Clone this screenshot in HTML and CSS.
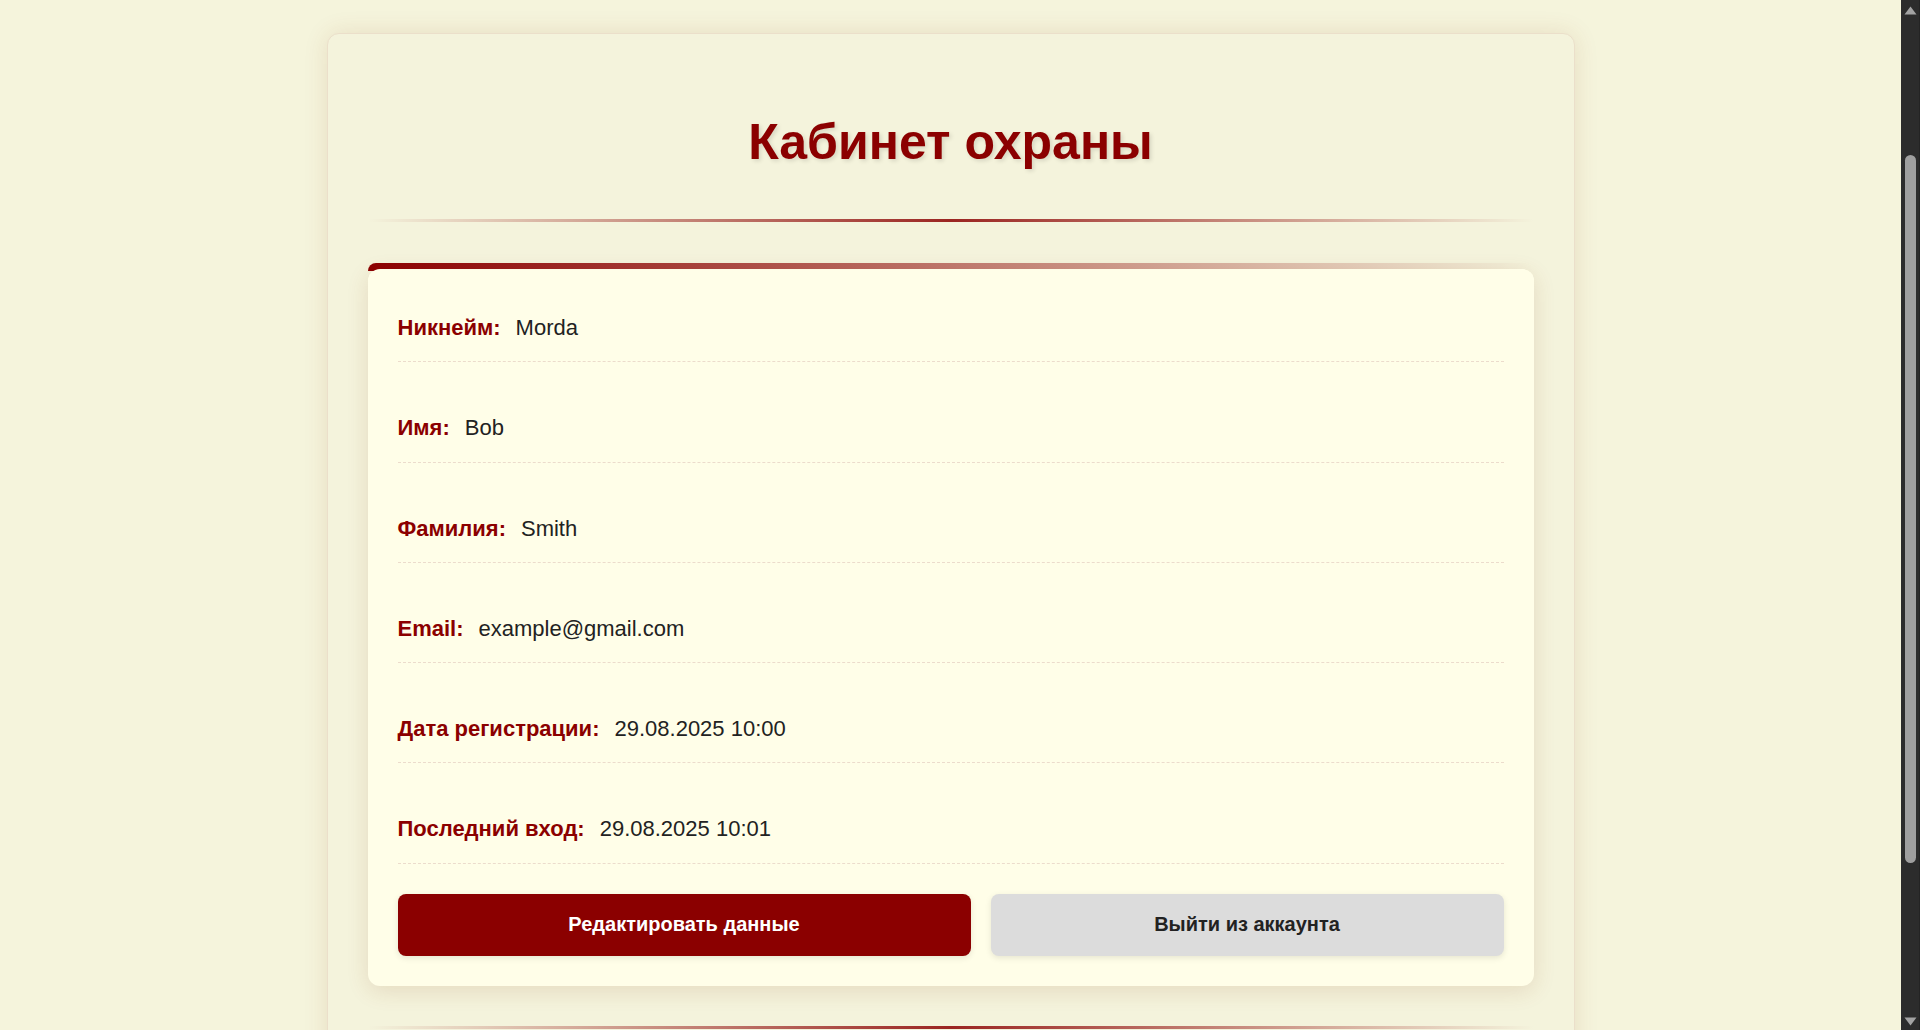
FILE: index.html
```html
<!DOCTYPE html>
<html lang="ru">
<head>
<meta charset="utf-8">
<title>Кабинет охраны</title>
<link rel="stylesheet" href="styles.css">
</head>
<body>
  <main class="container">
    <h1 class="title">Кабинет охраны</h1>
    <div class="divider"></div>

    <section class="card">
      <div class="row"><span class="label">Никнейм:</span><span class="value">Morda</span></div>
      <div class="row"><span class="label">Имя:</span><span class="value">Bob</span></div>
      <div class="row"><span class="label">Фамилия:</span><span class="value">Smith</span></div>
      <div class="row"><span class="label">Email:</span><span class="value">example@gmail.com</span></div>
      <div class="row"><span class="label">Дата регистрации:</span><span class="value">29.08.2025 10:00</span></div>
      <div class="row"><span class="label">Последний вход:</span><span class="value">29.08.2025 10:01</span></div>

      <div class="actions">
        <button class="btn btn-primary" type="button">Редактировать данные</button>
        <button class="btn btn-secondary" type="button">Выйти из аккаунта</button>
      </div>
    </section>

    <div class="divider divider-bottom"></div>
  </main>

  <div class="scrollbar" aria-hidden="true">
    <svg class="sb-arrow sb-up" width="13" height="9" viewBox="0 0 13 9"><path d="M6.5 0.5 L12.5 8.5 L0.5 8.5 Z" fill="#a3a3a3"/></svg>
    <div class="sb-thumb"></div>
    <svg class="sb-arrow sb-down" width="13" height="9" viewBox="0 0 13 9"><path d="M0.5 0.5 L12.5 0.5 L6.5 8.5 Z" fill="#a3a3a3"/></svg>
  </div>
</body>
</html>
```

FILE: styles.css
```css
* {
  box-sizing: border-box;
}

html {
  background: #f5f4dc;
}

body {
  margin: 0;
  padding: 33px 19px 60px 0;
  background: #f5f4dc;
  font-family: "Liberation Sans", Arial, sans-serif;
  color: #222;
}

.container {
  width: 1248px;
  margin: 0 auto;
  padding: 40px 40px 200px;
  background: #f4f3dc;
  border: 1px solid #ebdfca;
  border-radius: 12px;
  box-shadow: 0 0 24px rgba(139, 69, 19, 0.12);
}

.title {
  margin: 41px 0 49px;
  text-align: center;
  font-size: 50px;
  line-height: 55px;
  font-weight: 700;
  color: #8b0000;
  text-shadow: 2px 2px 4px rgba(0, 0, 0, 0.12);
}

.divider {
  height: 3px;
  margin-bottom: 47px;
  background: linear-gradient(90deg, rgba(139, 0, 0, 0), #8b0000, rgba(139, 0, 0, 0));
  opacity: 0.85;
}

.divider-bottom {
  margin-top: 40px;
  margin-bottom: 0;
}

.card {
  position: relative;
  padding: 23px 30px 30px;
  background: #fffee8;
  border-radius: 12px;
  box-shadow: 0 5px 22px rgba(139, 69, 19, 0.14);
}

.card::before {
  content: "";
  position: absolute;
  top: -6px;
  left: 0;
  right: 0;
  height: 8px;
  border-radius: 12px 12px 0 0;
  background: linear-gradient(90deg, #8b0000, rgba(139, 0, 0, 0));
  z-index: 0;
}

.card::after {
  content: "";
  position: absolute;
  top: 0;
  left: 0;
  right: 0;
  height: 14px;
  border-radius: 12px 12px 0 0;
  background: #fffee8;
  z-index: 0;
}

.row {
  position: relative;
  z-index: 1;
  display: flex;
  align-items: baseline;
  gap: 15px;
  padding: 23px 0 21px;
  margin-bottom: 30px;
  border-bottom: 1px dashed #ecdccc;
  font-size: 22px;
  line-height: 1.15;
}

.label {
  font-weight: 700;
  color: #8b0000;
}

.value {
  color: #222;
}

.actions {
  position: relative;
  z-index: 1;
  display: grid;
  grid-template-columns: 573fr 513fr;
  gap: 20px;
}

.btn {
  display: block;
  padding: 19.5px 20px;
  border: none;
  border-radius: 8px;
  font-family: "Liberation Sans", Arial, sans-serif;
  font-size: 20px;
  line-height: 23px;
  font-weight: 700;
  text-align: center;
  cursor: pointer;
  box-shadow: 0 2px 6px rgba(0, 0, 0, 0.1);
}

.btn-primary {
  background: #8b0000;
  color: #ffffff;
}

.btn-secondary {
  background: #dcdcdc;
  color: #222;
}

.scrollbar {
  position: fixed;
  top: 0;
  right: 0;
  bottom: 0;
  width: 19px;
  background: #2c2c2c;
  border-right: 1px solid #242424;
}

.sb-arrow {
  position: absolute;
  left: 3px;
  display: block;
}

.sb-up {
  top: 6px;
}

.sb-down {
  bottom: 4px;
}

.sb-thumb {
  position: absolute;
  top: 155px;
  left: 4px;
  width: 11px;
  height: 708px;
  border-radius: 6px;
  background: #9f9f9f;
}
```
